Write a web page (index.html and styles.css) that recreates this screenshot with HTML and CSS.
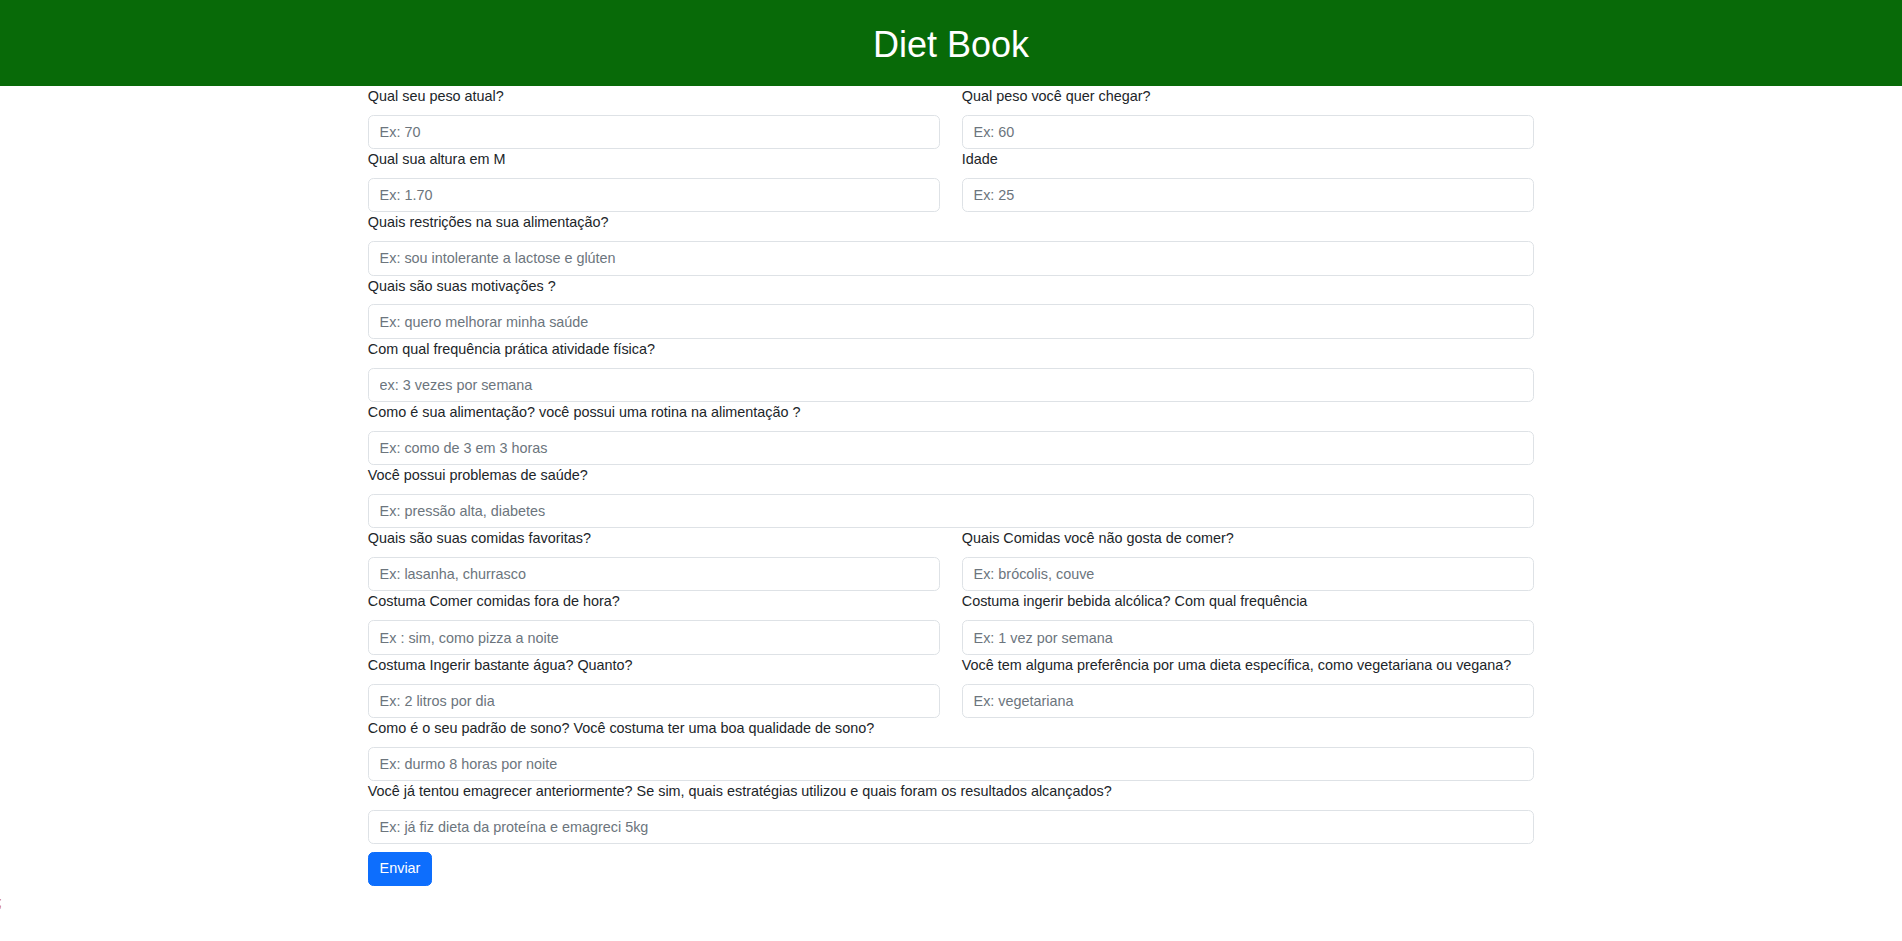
FILE: index.html
```html
<!DOCTYPE html>
<html lang="pt-BR">
<head>
<meta charset="utf-8">
<title>Diet Book</title>
<link rel="stylesheet" href="styles.css">
</head>
<body>
<header class="topbar">
  <h1 class="brand">Diet Book</h1>
</header>
<main class="container">
  <form class="diet-form">
    <div class="field">
      <label class="field-label">Qual seu peso atual?</label>
      <input class="field-input" type="text" placeholder="Ex: 70">
    </div>
    <div class="field">
      <label class="field-label">Qual peso você quer chegar?</label>
      <input class="field-input" type="text" placeholder="Ex: 60">
    </div>
    <div class="field">
      <label class="field-label">Qual sua altura em M</label>
      <input class="field-input" type="text" placeholder="Ex: 1.70">
    </div>
    <div class="field">
      <label class="field-label">Idade</label>
      <input class="field-input" type="text" placeholder="Ex: 25">
    </div>
    <div class="field full">
      <label class="field-label">Quais restrições na sua alimentação?</label>
      <input class="field-input" type="text" placeholder="Ex: sou intolerante a lactose e glúten">
    </div>
    <div class="field full">
      <label class="field-label">Quais são suas motivações ?</label>
      <input class="field-input" type="text" placeholder="Ex: quero melhorar minha saúde">
    </div>
    <div class="field full">
      <label class="field-label">Com qual frequência prática atividade física?</label>
      <input class="field-input" type="text" placeholder="ex: 3 vezes por semana">
    </div>
    <div class="field full">
      <label class="field-label">Como é sua alimentação? você possui uma rotina na alimentação ?</label>
      <input class="field-input" type="text" placeholder="Ex: como de 3 em 3 horas">
    </div>
    <div class="field full">
      <label class="field-label">Você possui problemas de saúde?</label>
      <input class="field-input" type="text" placeholder="Ex: pressão alta, diabetes">
    </div>
    <div class="field">
      <label class="field-label">Quais são suas comidas favoritas?</label>
      <input class="field-input" type="text" placeholder="Ex: lasanha, churrasco">
    </div>
    <div class="field">
      <label class="field-label">Quais Comidas você não gosta de comer?</label>
      <input class="field-input" type="text" placeholder="Ex: brócolis, couve">
    </div>
    <div class="field">
      <label class="field-label">Costuma Comer comidas fora de hora?</label>
      <input class="field-input" type="text" placeholder="Ex : sim, como pizza a noite">
    </div>
    <div class="field">
      <label class="field-label">Costuma ingerir bebida alcólica? Com qual frequência</label>
      <input class="field-input" type="text" placeholder="Ex: 1 vez por semana">
    </div>
    <div class="field">
      <label class="field-label">Costuma Ingerir bastante água? Quanto?</label>
      <input class="field-input" type="text" placeholder="Ex: 2 litros por dia">
    </div>
    <div class="field">
      <label class="field-label">Você tem alguma preferência por uma dieta específica, como vegetariana ou vegana?</label>
      <input class="field-input" type="text" placeholder="Ex: vegetariana">
    </div>
    <div class="field full">
      <label class="field-label">Como é o seu padrão de sono? Você costuma ter uma boa qualidade de sono?</label>
      <input class="field-input" type="text" placeholder="Ex: durmo 8 horas por noite">
    </div>
    <div class="field full">
      <label class="field-label">Você já tentou emagrecer anteriormente? Se sim, quais estratégias utilizou e quais foram os resultados alcançados?</label>
      <input class="field-input" type="text" placeholder="Ex: já fiz dieta da proteína e emagreci 5kg">
    </div>
    <div class="actions full">
      <button class="btn-submit" type="button">Enviar</button>
    </div>
  </form>
</main>
<div class="stray">;</div>
</body>
</html>
```
FILE: styles.css
```css
* {
  box-sizing: border-box;
}

html, body {
  margin: 0;
  padding: 0;
  background: #ffffff;
}

body {
  font-family: "Liberation Sans", Arial, sans-serif;
  font-size: 14.4px;
  line-height: 21.6px;
  color: #212529;
}

.topbar {
  background: #086a08;
  padding: 22.6px 0 20.2px;
  text-align: center;
}

.brand {
  margin: 0;
  font-size: 36px;
  line-height: 43.2px;
  font-weight: 400;
  color: #ffffff;
}

.container {
  width: 1166.4px;
  margin: 0 auto;
}

.diet-form {
  display: grid;
  grid-template-columns: 1fr 1fr;
  column-gap: 21.6px;
}

.field {
  display: flex;
  flex-direction: column;
  min-width: 0;
}

.full {
  grid-column: 1 / -1;
}

.field-label {
  display: block;
  line-height: 21.7px;
  margin-bottom: 7.2px;
  white-space: nowrap;
}

.field-input {
  display: block;
  width: 100%;
  height: 34.3px;
  padding: 5.4px 10.8px;
  font-family: inherit;
  font-size: 14.4px;
  line-height: 21.6px;
  color: #212529;
  background: #ffffff;
  border: 1px solid #dee2e6;
  border-radius: 5.4px;
  outline: none;
}

.field-input::placeholder {
  color: #6c757d;
  opacity: 1;
}

.actions {
  padding-top: 7.4px;
}

.btn-submit {
  display: inline-block;
  height: 34px;
  padding: 5.4px 10.8px;
  font-family: inherit;
  font-size: 14.4px;
  line-height: 21.6px;
  color: #ffffff;
  background: #0d6efd;
  border: 1px solid #0d6efd;
  border-radius: 5.4px;
  cursor: pointer;
}

.stray {
  margin-top: 6px;
  margin-left: -2px;
  color: #d2691e;
  line-height: 21.6px;
}
```
